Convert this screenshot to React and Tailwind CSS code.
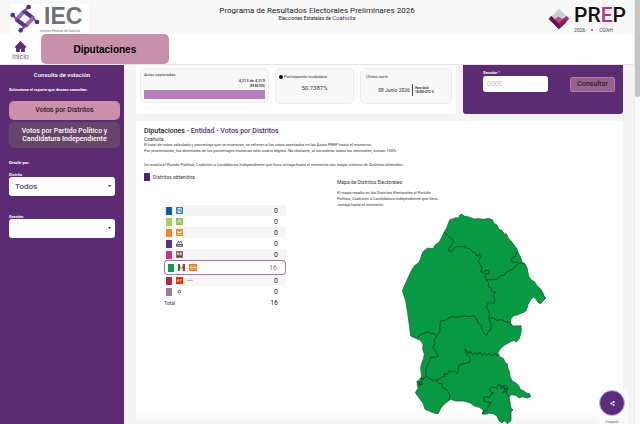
import React, { useState } from "react";
import { AiFillHome } from "react-icons/ai";
import { FaShareAlt } from "react-icons/fa";

// ================= LOGOS =================
const IecLogo = () => (
  <svg viewBox="0 0 90 90" className="w-[30px] h-[30px]">
    <g strokeWidth="12" fill="none">
      <path d="M17 50 L43 21" stroke="#9a6bb0" />
      <path d="M40 20 L70 43" stroke="#5b2c80" />
      <path d="M71 40 L46 67" stroke="#9a6bb0" />
      <path d="M18 46 L48 68" stroke="#5b2c80" />
    </g>
    <path d="M9 34 L22 48 M55 10 L42 22 M80 53 L68 41 M33 78 L46 66" stroke="#7c4a9c" strokeWidth="6" />
    <g fill="#5b2c80">
      <circle cx="8" cy="33" r="7" />
      <circle cx="56" cy="9" r="7" />
      <circle cx="81" cy="54" r="7" />
      <circle cx="32" cy="79" r="7" />
    </g>
  </svg>
);

const PrepLogo = () => (
  <svg viewBox="0 0 66 66" className="w-[22px] h-[22px]">
    <path d="M33 2 L57 26 L33 50 L9 26 Z" fill="#cfcfd1" />
    <path d="M2 32 L10 24 L20 34 L32 26 L43 34 L56 24 L64 32 L33 64 Z" fill="#a12a6c" />
    <path d="M2 32 L10 24 L33 48 L33 64 Z" fill="#5d1c46" />
    <path d="M20 34 L32 26 L43 34 L33 45 Z" fill="#c0488a" />
    <path d="M33 48 L48 34 L56 42 L33 64 Z" fill="#7d1f56" />
  </svg>
);

// ================= PARTIES =================
const Pan = () => (
  <svg viewBox="0 0 21 21" className="w-[7px] h-[7px]">
    <rect width="21" height="21" rx="4" fill="#2f6fb8" />
    <circle cx="10.500" cy="10.500" r="8" fill="#dce8f5" />
    <path d="M5 14 V8 H9 M9 14 L12 7 L15 14 M16 14 V8" stroke="#2f6fb8" strokeWidth="2" fill="none" />
  </svg>
);

const Verde = () => (
  <svg viewBox="0 0 21 21" className="w-[7px] h-[7px]">
    <rect width="21" height="21" fill="#8fc45a" />
    <path d="M3 17 L9 5 L12 12 L17 4 M12 12 L17 17" stroke="#eef7e2" strokeWidth="2" fill="none" />
  </svg>
);

const Movimiento = () => (
  <svg viewBox="0 0 21 21" className="w-[7px] h-[7px]">
    <rect width="21" height="21" fill="#f08a24" />
    <path d="M3 5 L10 9 L18 5 L15 12 H6 Z" fill="#fff" />
    <path d="M4 16 H17" stroke="#fff" strokeWidth="2" />
  </svg>
);

const Nueva = () => (
  <svg viewBox="0 0 21 21" className="w-[7px] h-[7px]">
    <path d="M3 11 L8 3 L10 10 L15 3 L18 11" stroke="#6c6278" strokeWidth="3" fill="none" />
    <rect y="12" width="21" height="8" fill="#5d5468" />
    <path d="M3 16 H18" stroke="#cfc8d8" strokeWidth="2" />
  </svg>
);

const Morena = () => (
  <svg viewBox="0 0 21 21" className="w-[7px] h-[7px]">
    <rect width="21" height="21" fill="#8b7466" />
    <circle cx="6" cy="8" r="3" fill="#e8ded4" />
    <circle cx="14" cy="8" r="3" fill="#e8ded4" />
    <path d="M3 16 H18" stroke="#5b3a34" strokeWidth="3" />
  </svg>
);

const Pri = () => (
  <svg viewBox="0 0 21 21" className="w-[7px] h-[7px]">
    <rect width="7" height="21" fill="#1d8a4a" />
    <rect x="7" width="7" height="21" fill="#f4f4f4" />
    <rect x="14" width="7" height="21" fill="#d22f3a" />
    <path d="M3 16 V6 L10 13 L18 5 V16" stroke="#3d4a42" strokeWidth="2" fill="none" />
  </svg>
);

const Udc = () => (
  <svg viewBox="0 0 24 21" className="w-[8px] h-[7px]">
    <rect width="24" height="21" fill="#ee7f1d" />
    <path d="M3 5 H21 M3 16 H21" stroke="#f6b376" strokeWidth="2" />
    <path d="M4 10.500 H20" stroke="#fff" strokeWidth="4" strokeDasharray="4 2" />
  </svg>
);

const Pt = () => (
  <svg viewBox="0 0 21 21" className="w-[7px] h-[7px]">
    <rect width="21" height="21" fill="#d8281f" />
    <path d="M4 17 V8 H9 V12 H4 M11 8 H18 M14.500 8 V17" stroke="#f9c33a" strokeWidth="2.500" fill="none" />
  </svg>
);

const Dash = () => (
  <svg viewBox="0 0 18 21" className="w-[6px] h-[7px]">
    <path d="M0 10 H18" stroke="#a58d8d" strokeWidth="2" />
  </svg>
);

const Independiente = () => (
  <svg viewBox="0 0 21 21" className="w-[7px] h-[7px]">
    <circle cx="10" cy="11" r="4" stroke="#6c5a68" strokeWidth="3" fill="none" />
  </svg>
);

const partidos = [
  { id: "pan", color: "#1257a5", logos: [Pan], total: 0 },
  { id: "verde", color: "#a6cf5f", logos: [Verde], total: 0 },
  { id: "mc", color: "#e88c1e", logos: [Movimiento], total: 0 },
  { id: "nueva", color: "#5b2c80", logos: [Nueva], total: 0 },
  { id: "morena", color: "#cc2f86", logos: [Morena], total: 0 },
  { id: "pri", color: "#11964a", logos: [Pri, Udc], total: 16, winner: true },
  { id: "pt", color: "#ab2f42", logos: [Pt, Dash], total: 0 },
  { id: "ind", color: "#96808f", logos: [Independiente], total: 0 },
];

// ================= MAP =================
const Mapa = () => (
  <svg viewBox="0 0 450 672" className="w-[150px] h-[224px]" role="img" aria-label="Mapa de Distritos Electorales">
    <path
      transform="translate(-33 0)"
      d="M163 95 L170 84 L175 70 L180 59 L188 57 L196 53 L206 54 L210 44 L217 43 L222 48 L236 51 L252 57 L268 56 L282 58 L296 55 L308 60 L311 70 L321 75 L327 88 L337 92 L343 103 L349 101 L354 113 L364 124 L374 138 L380 145 L384 157 L391 170 L397 187 L407 194 L412 206 L416 228 L424 240 L434 245 L441 257 L452 267 L459 279 L463 289 L468 294 L458 304 L452 311 L445 308 L437 296 L430 291 L422 299 L414 314 L409 332 L401 337 L390 341 L382 345 L371 347 L363 356 L361 370 L370 378 L393 377 L394 394 L388 416 L379 426 L372 421 L359 427 L343 436 L331 446 L324 458 L327 468 L341 476 L344 486 L352 492 L353 504 L359 516 L360 530 L367 543 L377 548 L386 557 L391 568 L403 574 L411 580 L419 581 L422 590 L412 594 L397 590 L388 594 L377 586 L364 584 L357 590 L360 606 L363 624 L369 630 L363 636 L363 662 L352 671 L343 662 L336 669 L327 662 L321 648 L309 641 L299 639 L287 643 L277 642 L280 631 L268 622 L253 618 L241 609 L222 603 L196 603 L182 598 L168 608 L158 617 L151 627 L145 641 L134 640 L119 634 L105 628 L100 611 L89 596 L76 578 L84 565 L81 549 L91 540 L95 528 L92 508 L94 492 L100 478 L103 462 L98 447 L99 432 L91 421 L80 416 L62 408 L58 376 L53 340 L47 302 L37 272 L49 245 L61 218 L72 199 L87 187 L92 175 L98 157 L113 144 L130 146 L135 135 L148 126 L155 112 Z"
      fill="#089a42"
      stroke="#0b5a2c"
      strokeWidth="2"
      strokeLinejoin="round"
    />
    <g transform="translate(-33 0)" fill="none" stroke="#084d24" strokeWidth="3" strokeLinejoin="round">
      <path d="M162 96 L173 107 L184 116 L192 122 L187 130 L174 152 L184 154 L192 145 L202 139 L212 141 L223 138 L231 145 L240 146 L247 155 L257 160 L261 169 L269 162 L271 172 L264 184 L270 194 L276 204 L272 215 L282 217 L286 211 L298 212 L296 222 L286 220 L285 229 L289 240" />
      <path d="M289 240 L305 239 L320 238 L330 228 L343 225 L351 215 L363 210 L373 202 L382 193 L391 189 L405 192" />
      <path d="M388 189 L374 187 L362 182 L367 173 L377 168 L379 159 L384 157" />
      <path d="M289 240 L296 248 L294 259 L304 265 L305 274 L317 277 L308 287 L315 298 L312 311 L299 308 L291 312 L290 324 L296 334 L299 344 L296 356 L303 370 L302 390 L294 395 L291 405 L282 400 L276 389 L274 377 L264 369 L259 356 L252 347 L237 350 L226 348 L212 348 L200 352 L187 350 L177 353 L165 361 L152 363 L149 380 L150 394 L141 407 L133 419 L135 432 L128 443 L138 454 L145 470 L122 472 L119 484 L113 494 L108 508 L108 528 L117 535 L129 540 L140 542" />
      <path d="M82 415 L90 404 L104 399 L115 395 L123 401 L132 400 L137 407" />
      <path d="M298 354 L310 355 L321 361 L334 359 L346 366 L357 366 L365 376" />
      <path d="M138 541 L149 537 L156 530 L164 531 L163 521 L172 523 L177 513 L187 517 L193 513 L202 520 L206 508 L205 498 L218 492 L230 489 L240 486 L239 470 L230 462 L224 448 L232 453 L236 460 L241 454 L248 464 L257 457 L263 465 L270 456 L276 466 L284 459 L290 467 L298 460 L306 468 L314 459 L321 468 L328 462" />
      <path d="M138 541 L146 550 L156 552 L157 563 L169 568 L175 576 L180 589 L176 601" />
      <path d="M108 528 L101 536 L92 534 L80 546 L91 547 L86 556 L97 553 L94 543 L101 539" />
      <path d="M277 642 L283 630 L290 632 L294 620 L303 608 L292 607 L282 604 L282 592 L291 590 L299 592 L303 583 L311 579 L299 574 L299 565 L310 561 L319 565 L325 554 L337 558 L348 556 L354 564 L347 574 L353 583 L357 593" />
      <path d="M330 555 L333 565 L342 562 L344 572 L339 577 L350 575 L352 568 L344 566 M337 558 L351 569" />
    </g>
  </svg>
);

// ================= SELECT =================
const Selector = ({ id, label, options }) => (
  <div className="flex flex-col">
    <label htmlFor={id} className="text-[4px] leading-[5px] font-bold">
      {label}
    </label>
    <div className="relative">
      <select
        id={id}
        className="block appearance-none w-full h-[19px] rounded-[3px] bg-white text-[#222] text-[8px] leading-[10px] pl-1.5"
      >
        {options.map((o) => (
          <option key={o}>{o}</option>
        ))}
      </select>
      <svg viewBox="0 0 9 6" className="absolute right-1 top-2 w-[3px] h-[2px] pointer-events-none">
        <path d="M0 0 H9 L4.500 6 Z" fill="#333" />
      </svg>
    </div>
  </div>
);

const Header = () => (
  <header className="shrink-0">
    <div className="h-[34px] bg-[#f8f8f8] grid grid-cols-[1fr_auto_1fr] items-start">
      <div className="ml-2.5 mt-1 w-[79px] h-[30px] bg-white flex">
        <IecLogo />
        <div className="pl-1">
          <p className="font-['Liberation_Sans',sans-serif] font-bold text-[23px] leading-[25px] text-[#707078]">IEC</p>
          <p className="-ml-1 text-[3px] leading-[4px] text-[#777] whitespace-nowrap">Instituto Electoral de Coahuila</p>
        </div>
      </div>
      <div className="pt-1.5 text-center text-[#222]">
        <h1 className="text-[8px] leading-[9px]">
          Programa de Resultados <span className="text-[#5b2c73]">E</span>lectorales Preliminares 2026
        </h1>
        <p className="text-[5px] leading-[6px]">
          Elecciones Estatales de <span className="text-[6px] text-[#5b2c73]">Coahuila</span>
        </p>
      </div>
      <div className="justify-self-end flex gap-1 pt-2 pr-2">
        <PrepLogo />
        <div>
          <p className="text-[21px] leading-[15px] font-medium text-[#111]">
            PR<span className="text-[#c0307f]">E</span>P
          </p>
          <p className="flex gap-1.5 items-center pt-1 text-[5px] leading-[6px] text-[#444]">
            <span>2026</span>
            <span className="w-0.5 h-0.5 rounded-full bg-[#c0307f]" />
            <span>COAH</span>
          </p>
        </div>
      </div>
    </div>
    <nav className="h-[31px] bg-white flex items-center pl-3 gap-3 border-b border-[#e4e4e4]">
      <a href="#inicio" className="flex flex-col items-center pt-1 text-[#5b2c73]">
        <AiFillHome className="w-[13px] h-[13px]" />
        <span className="text-[7px] leading-[9px] text-[#7b5a8c]">Inicio</span>
      </a>
      <a
        href="#diputaciones"
        className="w-[128px] h-[30px] rounded-[5px] bg-[#c990a9] flex items-center justify-center font-['Liberation_Sans',sans-serif] font-bold text-[10px] text-black"
      >
        Diputaciones
      </a>
    </nav>
  </header>
);

const Sidebar = () => (
  <aside className="w-[124px] shrink-0 bg-[#5b2c73] text-white pl-[9px]">
    <h2 className="pt-1.5 text-center pr-[9px] text-[6px] leading-[8px] font-medium">Consulta de votación</h2>
    <p className="mt-2 text-[4px] leading-[6px] font-bold">Selecciona el reporte que deseas consultar:</p>
    <div className="mt-2 mr-1 flex flex-col gap-0.5">
      <button className="h-[19px] rounded-[5px] bg-[#c990a9] text-[#2c1a2a] text-[7px] font-medium">
        Votos por Distritos
      </button>
      <button className="h-[26px] rounded-[5px] bg-[#664569] text-white text-[7px] leading-[8px] font-medium">
        Votos por Partido Político y<br />Candidatura Independiente
      </button>
    </div>
    <p className="mt-3 text-[4px] leading-[6px] font-bold">Detalle por:</p>
    <div className="mt-1.5 mr-[9px] flex flex-col gap-[18px]">
      <Selector id="distrito" label="Distrito" options={["Todos"]} />
      <Selector id="seccion-lista" label="Sección" options={[""]} />
    </div>
  </aside>
);

const Resumen = () => {
  const [seccion, setSeccion] = useState("");

  return (
    <div className="shrink-0 grid grid-cols-[2fr_1fr] gap-[7px] h-[49px] text-[#333]">
      <section className="min-w-0 bg-white rounded-b-[3px] px-1 pt-[3px] flex gap-1.5 items-start">
        <div className="w-[129px] h-[35px] rounded-[5px] border border-[#ececec] bg-[#f8f8f8] px-[3px] pt-[3px]">
          <p className="text-[4px] leading-[6px]">Actas capturadas</p>
          <p className="text-[4px] leading-[6px] text-right font-medium">4,313 de 4,319</p>
          <p className="text-[3px] leading-[5px] text-right font-bold">(99.8610%)</p>
          <div className="mt-px h-[9px] bg-[#d9c3df]">
            <div className="h-full bg-[#b181b8]" style={{ width: "99.861%" }} />
          </div>
        </div>
        <div className="flex-1 h-[36px] rounded-[5px] border border-[#ececec] bg-[#f8f8f8] px-[3px] pt-[5px]">
          <p className="flex items-center gap-px text-[4px] leading-[6px] whitespace-nowrap">
            <span className="w-[4px] h-[4px] rounded-full bg-black" />
            Participación ciudadana
          </p>
          <p className="pt-1 text-center text-[6px] leading-[8px]">50.7387%</p>
        </div>
        <div className="w-[92px] h-[36px] rounded-[5px] border border-[#ececec] bg-[#f8f8f8] px-[5px] pt-[5px]">
          <p className="text-[4px] leading-[6px]">Último corte</p>
          <div className="flex items-center justify-center gap-0.5 pt-1">
            <p className="text-[5px] leading-[6px]">08 Junio 2026</p>
            <p className="border-l border-[#444] pl-0.5 py-0.5 text-[3px] leading-[4px] font-bold">
              Hora local
              <br />
              18:00h UTC-6
            </p>
          </div>
        </div>
      </section>
      <form
        className="min-w-0 bg-[#5b2c73] rounded-b-[3px] pl-5 pr-2 pt-[5px] flex justify-between"
        onSubmit={(e) => e.preventDefault()}
      >
        <div className="flex flex-col">
          <label htmlFor="seccion" className="text-[4px] leading-[6px] font-bold text-white">
            Sección *
          </label>
          <input
            id="seccion"
            type="text"
            placeholder="0000"
            value={seccion}
            onChange={(e) => setSeccion(e.target.value)}
            className="w-[65px] h-[16px] rounded-[3px] bg-white pl-1 text-[7px] text-[#333] placeholder:text-[#c0c0c0]"
          />
        </div>
        <button
          type="submit"
          className="mt-[7px] w-[45px] h-[15px] rounded-[2px] border border-[#b07fa3] bg-[#95628c] text-[7px] font-medium text-[#33183a]"
        >
          Consultar
        </button>
      </form>
    </div>
  );
};

const Resultados = () => (
  <section className="mt-[7px] flex-1 bg-white rounded-t-[3px] pl-2 pt-1.5 text-[#333]">
    <h2 className="text-[7px] leading-[9px] font-medium text-[#222]">
      Diputaciones <span className="text-[#5b2c73]">- Entidad - Votos por Distritos</span>
    </h2>
    <p className="text-[5px] leading-[6px]">Coahuila</p>
    <div className="text-[4px] leading-[6px]">
      <p>El total de votos calculado y porcentaje que se muestran, se refieren a los votos asentados en las Actas PREP hasta el momento.</p>
      <p>Por presentación, los decimales de los porcentajes muestran sólo cuatro dígitos. No obstante, al considerar todos los decimales, suman 100%.</p>
      <p className="mt-2">Se resalta el Partido Político, Coalición o Candidatura Independiente que lleva ventaja hasta el momento con mayor número de Distritos obtenidos.</p>
    </div>

    <div className="flex">
      <div className="w-[193px] shrink-0">
        <p className="mt-[5px] flex items-center gap-[3px] text-[5px] leading-[8px]">
          <span className="w-[6px] h-[8px] bg-[#4b2a63]" />
          Distritos obtenidos
        </p>
        <table className="mt-6 ml-5 w-[122px] border-separate border-spacing-0 text-[6px] leading-[8px]">
          <tbody>
            {partidos.map((p) =>
              p.winner ? (
                <tr key={p.id} className="h-[15px]">
                  <td className="p-0 pl-[3px] rounded-l-[4px] border-y border-l border-[#a571ae]">
                    <span className="flex items-center gap-1">
                      <span className="w-[6px] h-[8px]" style={{ background: p.color }} />
                      {p.logos.map((Logo, i) => (
                        <Logo key={i} />
                      ))}
                    </span>
                  </td>
                  <td className="p-0 pr-2 text-right rounded-r-[4px] border-y border-r border-[#a571ae] text-[#8a6b94] text-[7px]">
                    {p.total}
                  </td>
                </tr>
              ) : (
                <tr key={p.id} className="h-[11px] odd:bg-[#f5f5f5]">
                  <td className="p-0 pl-0.5">
                    <span className="flex items-center gap-1">
                      <span className="w-[6px] h-[8px]" style={{ background: p.color }} />
                      {p.logos.map((Logo, i) => (
                        <Logo key={i} />
                      ))}
                    </span>
                  </td>
                  <td className="p-0 pr-2 text-right text-[7px] text-[#222]">{p.total}</td>
                </tr>
              )
            )}
            <tr className="h-[11px]">
              <td className="p-0 text-[5px]">Total</td>
              <td className="p-0 pr-2 text-right text-[7px] text-[#222]">16</td>
            </tr>
          </tbody>
        </table>
      </div>
      <div className="pt-2.5">
        <h3 className="text-[5px] leading-[8px]">Mapa de Distritos Electorales</h3>
        <p className="mt-1 w-[106px] text-[4px] leading-[6px]">
          El mapa resalta en los Distritos Electorales al Partido Político, Coalición o Candidatura Independiente que lleva ventaja hasta el momento.
        </p>
        <div className="-mt-2 ml-16">
          <Mapa />
        </div>
      </div>
    </div>
  </section>
);

const App = () => {
  return (
    <div className="h-screen overflow-hidden flex bg-white font-['Roboto',sans-serif]">
      <div className="flex-1 min-w-0 flex flex-col">
        <Header />
        <div className="flex-1 min-h-0 flex bg-[#f4f4f4]">
          <Sidebar />
          <main className="flex-1 min-w-0 overflow-hidden flex flex-col pl-3 pr-[11px]">
            <Resumen />
            <Resultados />
          </main>
        </div>
      </div>

      {/* SCROLLBAR */}
      <div className="w-[6px] bg-[#fafafa] border-l border-[#ececec]">
        <div className="h-[97px] rounded-b-sm bg-[#c4c4c4]" />
      </div>

      {/* BOTTOM FADE */}
      <div className="absolute bottom-0 left-[136px] right-[16px] h-3 bg-linear-to-t from-black/5 to-transparent pointer-events-none" />

      {/* SHARE */}
      <div className="absolute right-3 bottom-0 w-[32px] flex flex-col items-center bg-white/50">
        <button
          aria-label="Compartir"
          className="w-[26px] h-[26px] rounded-full bg-[#5b2c80] border border-[#c9bcd2] flex items-center justify-center text-white"
        >
          <FaShareAlt className="w-[5px] h-[5px]" />
        </button>
        <span className="pt-1 text-[3px] leading-[4px] text-[#555]">Compartir</span>
      </div>
    </div>
  );
};

export default App;
